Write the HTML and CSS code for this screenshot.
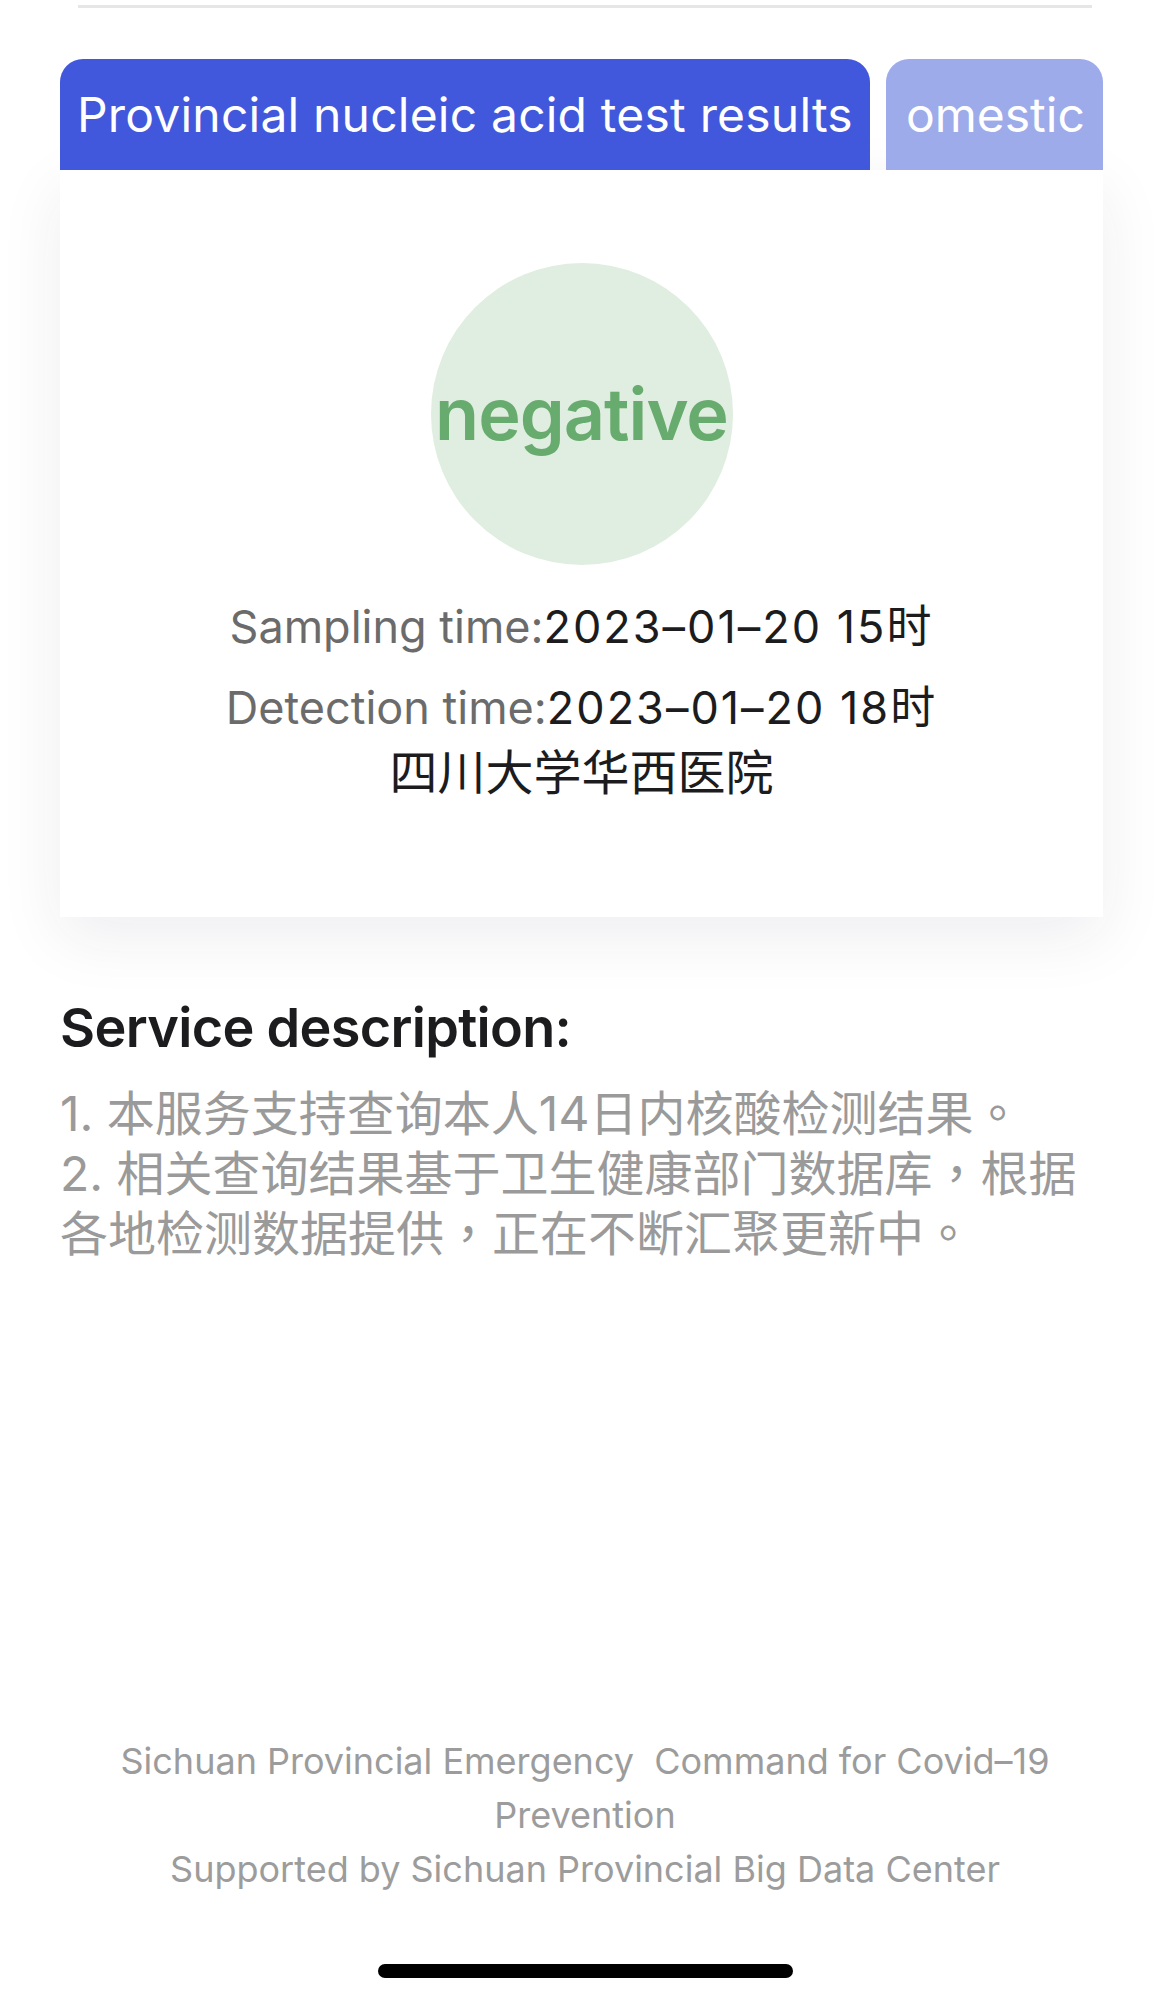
FILE: index.html
```html
<!DOCTYPE html>
<html lang="en">

<head>
  <meta charset="UTF-8">
  <meta name="viewport" content="width=device-width, initial-scale=1.0">
  <title>Nucleic Acid Test Results</title>
  <link rel="stylesheet" href="styles.css">
</head>

<body>

  <!-- Header rule -->
  <div class="top-rule"></div>

  <!-- Result card with tabs -->
  <div class="result">
    <div class="tabs">
      <div class="tab active">Provincial nucleic acid test results</div>
      <div class="tab">omestic</div>
    </div>
    <div class="result-card">
      <div class="status">negative</div>
      <p class="time-row"><span class="label">Sampling time:</span><span class="value">2023–01–20 15时</span></p>
      <p class="time-row"><span class="label">Detection time:</span><span class="value">2023–01–20 18时</span></p>
      <p class="hospital">四川大学华西医院</p>
    </div>
  </div>

  <!-- Service description -->
  <div class="service">
    <h2>Service description:</h2>
    <p>1. 本服务支持查询本人14日内核酸检测结果。<br>2. 相关查询结果基于卫生健康部门数据库，根据各地检测数据提供，正在不断汇聚更新中。</p>
  </div>

  <!-- Footer -->
  <div class="footer">
    <p>Sichuan Provincial Emergency&nbsp; Command for Covid–19 Prevention</p>
    <p>Supported by Sichuan Provincial Big Data Center</p>
  </div>

  <div class="home-indicator"></div>

</body>

</html>
```

FILE: styles.css
```css
body {
  font-family: Inter, "Noto Sans CJK SC", sans-serif;
  margin: 0;
  padding: 0;
  min-height: 2002px;
  display: flex;
  flex-direction: column;
  background: white;
  color: #1c1c1e;
}

/* Header rule */
.top-rule {
  height: 3px;
  margin: 5px 78px 0;
  background: #e6e6e6;
}

/* Tabs */
.result {
  margin-top: 51px;
  padding: 0 67px 0 60px;
}

.tabs {
  display: flex;
  gap: 16px;
}

.tab {
  flex: 1;
  min-width: 0;
  height: 111px;
  line-height: 111px;
  padding: 0 20px;
  font-size: 48px;
  color: white;
  background: #9eabea;
  border-radius: 23px 23px 0 0;
  white-space: nowrap;
  overflow: hidden;
}

.tab.active {
  flex: none;
  padding: 0 17px;
  letter-spacing: 0.2px;
  background: #4158dc;
}

/* Result card */
.result-card {
  display: flex;
  flex-direction: column;
  align-items: center;
  padding: 93px 0 119px;
  background: white;
  box-shadow: 0 20px 60px rgba(40, 40, 80, 0.08);
}

.status {
  width: 302px;
  height: 302px;
  border-radius: 50%;
  background: #dfeee0;
  display: flex;
  align-items: center;
  justify-content: center;
  font-size: 72px;
  font-weight: 600;
  line-height: 1;
  letter-spacing: -1px;
  color: #68ab6e;
  margin-bottom: 21px;
}

.time-row {
  margin: 0;
  font-size: 45px;
  line-height: 81px;
  color: #1c1c1e;
}

.time-row .label {
  color: #6b6b6b;
}

.time-row .value {
  letter-spacing: 2px;
}

.hospital {
  margin: 0;
  font-size: 48px;
  line-height: 50px;
}

/* Service description */
.service {
  padding: 0 60px;
  margin-top: 78px;
}

.service h2 {
  margin: 0;
  font-size: 54px;
  font-weight: 600;
  line-height: 66px;
  letter-spacing: -0.7px;
}

.service p {
  margin: 23px 0 0;
  font-family: Inter, "Noto Sans CJK TC", sans-serif;
  font-size: 48px;
  line-height: 60px;
  color: #9a9a9a;
}

/* Footer */
.footer {
  margin-top: auto;
  padding: 0 60px;
  text-align: center;
  font-size: 36px;
  line-height: 54px;
  color: #9c9c9c;
}

.footer p {
  margin: 0;
}

.home-indicator {
  width: 415px;
  height: 14px;
  margin: 68px auto 24px;
  border-radius: 7px;
  background: black;
}
```
